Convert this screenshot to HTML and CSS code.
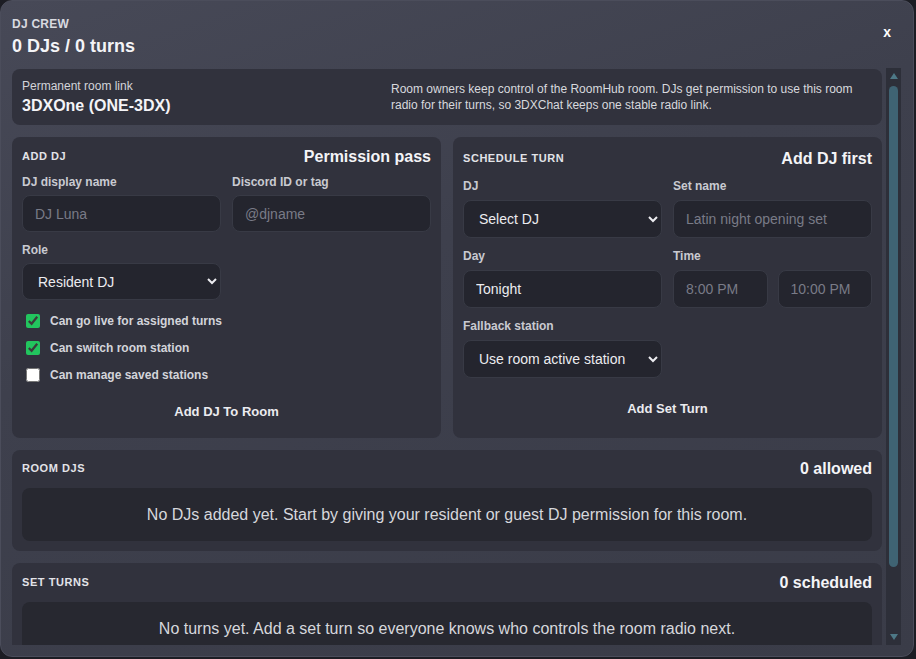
FILE: index.html
```html
<!DOCTYPE html>
<html>
<head>
  <meta charset="UTF-8">
  <link rel="stylesheet" href="styles.css">
</head>
<body>
  <div class="modal">
    <div class="modal-header">
      <div>
        <div class="eyebrow">DJ Crew</div>
        <h2 class="modal-title">0 DJs / 0 turns</h2>
      </div>
      <button class="close-btn" type="button">x</button>
    </div>

    <div class="modal-main">
      <div class="modal-body">
        <div class="link-card">
          <div>
            <div class="link-label">Permanent room link</div>
            <div class="link-name">3DXOne (ONE-3DX)</div>
          </div>
          <p class="link-note">Room owners keep control of the RoomHub room. DJs get permission to use this room radio for their turns, so 3DXChat keeps one stable radio link.</p>
        </div>

        <div class="panel-grid">
          <section class="panel">
            <div class="panel-head">
              <h3>Add DJ</h3>
              <strong>Permission pass</strong>
            </div>
            <div class="field-grid">
              <label class="field">
                <span>DJ display name</span>
                <input type="text" placeholder="DJ Luna">
              </label>
              <label class="field">
                <span>Discord ID or tag</span>
                <input type="text" placeholder="@djname">
              </label>
              <label class="field">
                <span>Role</span>
                <select>
                  <option>Resident DJ</option>
                  <option>Guest DJ</option>
                </select>
              </label>
            </div>
            <div class="checks">
              <label class="check"><input type="checkbox" checked> Can go live for assigned turns</label>
              <label class="check"><input type="checkbox" checked> Can switch room station</label>
              <label class="check"><input type="checkbox"> Can manage saved stations</label>
            </div>
            <button class="panel-btn" type="button">Add DJ To Room</button>
          </section>

          <section class="panel panel--schedule">
            <div class="panel-head">
              <h3>Schedule Turn</h3>
              <strong>Add DJ first</strong>
            </div>
            <div class="field-grid">
              <label class="field">
                <span>DJ</span>
                <select>
                  <option>Select DJ</option>
                </select>
              </label>
              <label class="field">
                <span>Set name</span>
                <input type="text" placeholder="Latin night opening set">
              </label>
              <label class="field">
                <span>Day</span>
                <input type="text" value="Tonight">
              </label>
              <div class="field">
                <span>Time</span>
                <div class="time-pair">
                  <input type="text" placeholder="8:00 PM">
                  <input type="text" placeholder="10:00 PM">
                </div>
              </div>
              <label class="field">
                <span>Fallback station</span>
                <select>
                  <option>Use room active station</option>
                </select>
              </label>
            </div>
            <button class="panel-btn" type="button">Add Set Turn</button>
          </section>
        </div>

        <section class="list-card">
          <div class="panel-head">
            <h3>Room DJs</h3>
            <strong>0 allowed</strong>
          </div>
          <div class="empty">No DJs added yet. Start by giving your resident or guest DJ permission for this room.</div>
        </section>

        <section class="list-card list-card--turns">
          <div class="panel-head">
            <h3>Set Turns</h3>
            <strong>0 scheduled</strong>
          </div>
          <div class="empty">No turns yet. Add a set turn so everyone knows who controls the room radio next.</div>
        </section>
      </div>

      <div class="scrollbar">
        <span class="scroll-arrow scroll-arrow--up"></span>
        <div class="scroll-track">
          <div class="scroll-thumb"></div>
        </div>
        <span class="scroll-arrow scroll-arrow--down"></span>
      </div>
    </div>
  </div>
</body>
</html>
```

FILE: styles.css
```css
* {
  box-sizing: border-box;
}

body {
  margin: 0;
  background: #1c1d24;
  font-family: 'Liberation Sans', Arial, sans-serif;
  color: #ececf0;
}

.modal {
  width: 914px;
  height: 657px;
  border: 1px solid #4b4d5b;
  border-radius: 12px;
  background: linear-gradient(160deg, #474957 0%, #3e404d 40%, #3a3c48 100%);
  padding: 16px 12px 11px 11px;
  display: flex;
  flex-direction: column;
}

.modal-header {
  display: flex;
  justify-content: space-between;
  align-items: flex-start;
  margin-bottom: 11px;
}

.eyebrow {
  font-size: 12px;
  line-height: 14px;
  font-weight: 700;
  text-transform: uppercase;
  letter-spacing: 0.02em;
  color: #d9dae0;
}

.modal-title {
  margin: 4px 0 0;
  font-size: 18px;
  line-height: 22px;
  font-weight: 700;
  color: #f4f4f7;
}

.close-btn {
  margin-top: 7px;
  padding: 0 10px;
  background: none;
  border: none;
  color: #ffffff;
  font-family: inherit;
  font-size: 14px;
  line-height: 16px;
  font-weight: 700;
  cursor: pointer;
}

.modal-main {
  flex: 1;
  min-height: 0;
  display: flex;
  gap: 4px;
}

.modal-body {
  flex: 1;
  min-width: 0;
  overflow: hidden;
  padding-top: 1px;
  display: flex;
  flex-direction: column;
  gap: 12px;
}

/* scroll bar drawn as in the capture */
.scrollbar {
  width: 15px;
  flex-shrink: 0;
  background: #2d2f39;
  display: flex;
  flex-direction: column;
}

.scroll-arrow {
  height: 16px;
  display: flex;
  align-items: center;
  justify-content: center;
}

.scroll-arrow::before {
  content: '';
  border-left: 4.5px solid transparent;
  border-right: 4.5px solid transparent;
}

.scroll-arrow--up::before {
  border-bottom: 6px solid #4d7886;
}

.scroll-arrow--down::before {
  border-top: 6px solid #4d7886;
}

.scroll-track {
  flex: 1;
  padding: 2px 3px 0;
}

.scroll-thumb {
  height: 481px;
  background: #3f6373;
  border-radius: 5px;
}

.link-card {
  flex-shrink: 0;
  background: #31323d;
  border-radius: 8px;
  padding: 10px;
  display: flex;
  justify-content: space-between;
  align-items: center;
}

.link-label {
  font-size: 12px;
  line-height: 15px;
  color: #d3d4da;
}

.link-name {
  margin-top: 2px;
  font-size: 16px;
  line-height: 19px;
  font-weight: 700;
  color: #f4f4f7;
}

.link-note {
  width: 470px;
  margin: 0 11px 0 0;
  font-size: 12px;
  line-height: 16px;
  color: #d8d9de;
}

.panel-grid {
  flex-shrink: 0;
  display: grid;
  grid-template-columns: 1fr 1fr;
  gap: 12px;
}

.panel,
.list-card {
  flex-shrink: 0;
  background: #31323d;
  border-radius: 8px;
  padding: 10px;
}

.panel-head {
  display: flex;
  justify-content: space-between;
  align-items: center;
  margin-bottom: 9px;
}

.panel-head h3 {
  margin: 0;
  font-size: 11px;
  line-height: 19px;
  font-weight: 700;
  text-transform: uppercase;
  letter-spacing: 0.05em;
  color: #e2e3e8;
}

.panel-head strong {
  font-size: 16px;
  line-height: 19px;
  color: #f4f4f7;
}

.field-grid {
  display: grid;
  grid-template-columns: 1fr 1fr;
  column-gap: 11px;
  row-gap: 11px;
}

.field {
  display: flex;
  flex-direction: column;
  gap: 6px;
}

.field > span {
  font-size: 12px;
  line-height: 14px;
  font-weight: 700;
  color: #c9cad1;
}

.field input,
.field select {
  width: 100%;
  height: 37px;
  background: #24252e;
  border: 1px solid #383a45;
  border-radius: 8px;
  color: #ececf0;
  font-family: inherit;
  font-size: 14px;
  padding: 0 12px;
  outline: none;
}

.field select {
  padding: 0 8px 0 11px;
  color-scheme: dark;
}

.field input::placeholder {
  color: #797b87;
}

.time-pair {
  display: grid;
  grid-template-columns: 1fr 1fr;
  gap: 10px;
}

.checks {
  margin-top: 14px;
  display: flex;
  flex-direction: column;
  gap: 13px;
}

.check {
  display: flex;
  align-items: center;
  gap: 10px;
  padding-left: 4px;
  font-size: 12px;
  line-height: 14px;
  font-weight: 700;
  color: #d3d4da;
}

.check input {
  width: 14px;
  height: 14px;
  margin: 0;
  accent-color: #22c55e;
}

.panel-btn {
  display: block;
  width: 100%;
  height: 34px;
  margin-top: 12px;
  background: none;
  border: none;
  color: #ebebef;
  font-family: inherit;
  font-size: 13px;
  font-weight: 700;
  cursor: pointer;
}

.panel--schedule {
  padding-top: 12px;
}

.panel--schedule .panel-head {
  margin-bottom: 11px;
}

.panel--schedule .field {
  gap: 7px;
}

.panel--schedule .field input,
.panel--schedule .field select {
  height: 38px;
}

.panel--schedule .panel-btn {
  margin-top: 13px;
}

.list-card {
  padding-top: 9px;
}

.list-card .panel-head {
  margin-bottom: 10px;
}

.list-card--turns {
  padding-top: 10px;
}

.empty {
  background: #272830;
  border-radius: 8px;
  padding: 18px 12px;
  text-align: center;
  font-size: 16px;
  line-height: 17px;
  color: #d6d7dc;
}
```
